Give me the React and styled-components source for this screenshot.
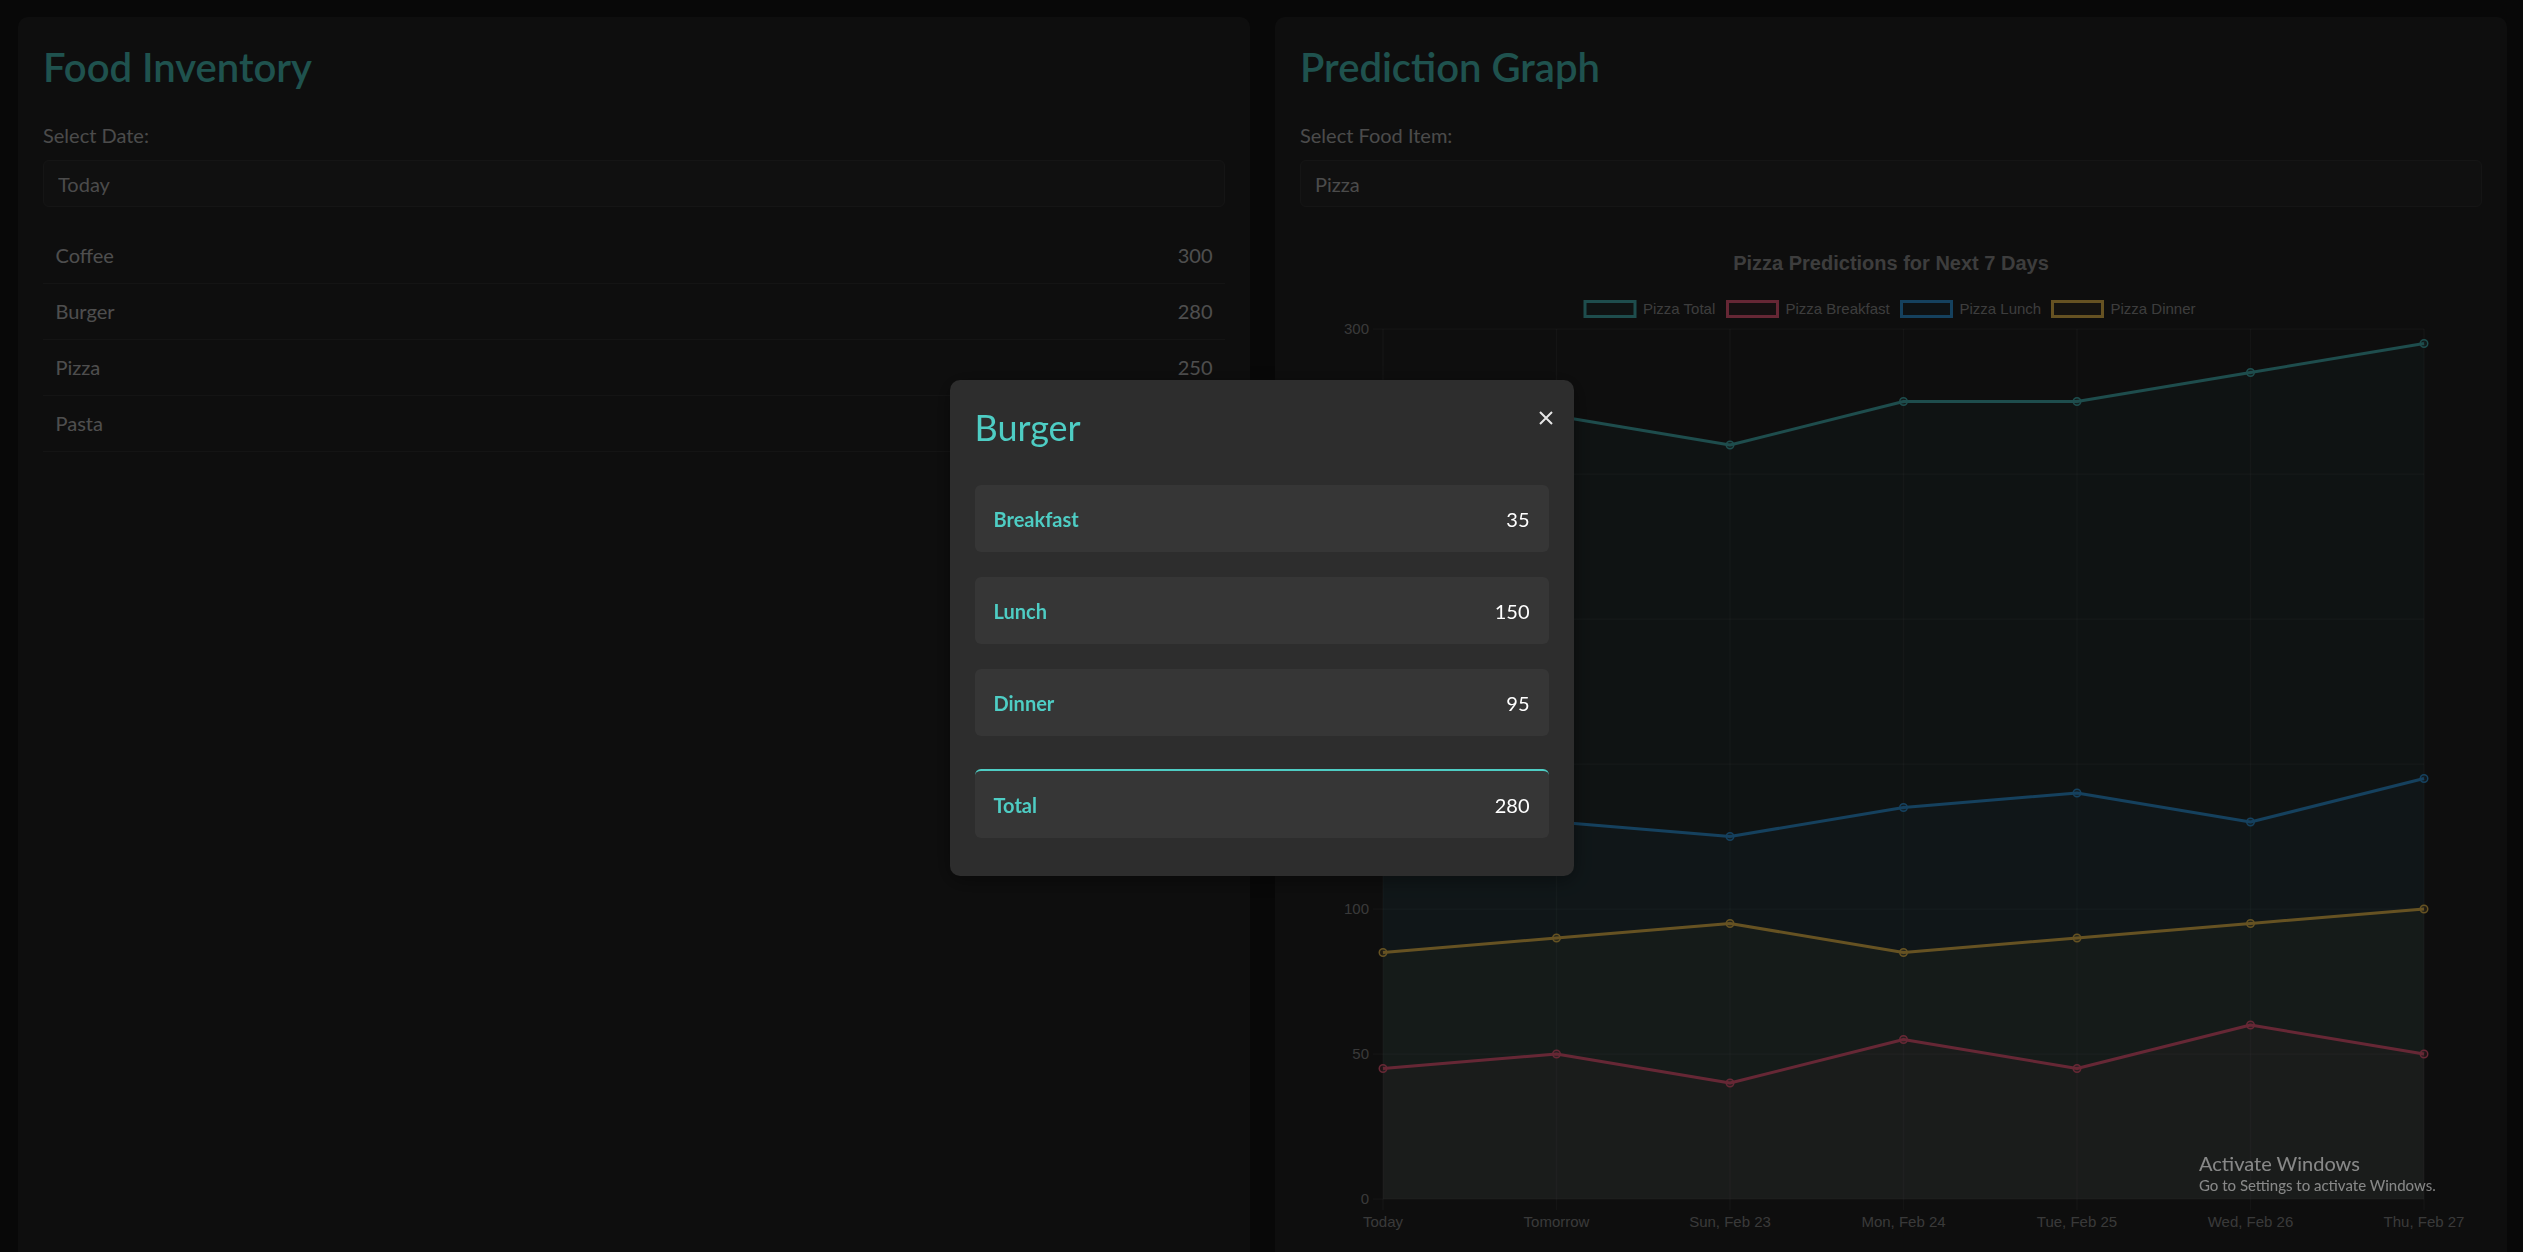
import React from 'react'
import styled, { createGlobalStyle } from 'styled-components'

const GlobalStyle = createGlobalStyle`
  * { box-sizing: border-box; }
  html, body {
    margin: 0;
    padding: 0;
    height: 100%;
    overflow: hidden;
    background: #141414;
  }
  body {
    font-family: Lato, "Segoe UI", "Open Sans", sans-serif;
    color: #c4c4c4;
  }
`

const inventory = [
    { name: 'Coffee', qty: 300 },
    { name: 'Burger', qty: 280 },
    { name: 'Pizza', qty: 250 },
    { name: 'Pasta', qty: 220 },
]

const burger = [
    { meal: 'Breakfast', qty: 35 },
    { meal: 'Lunch', qty: 150 },
    { meal: 'Dinner', qty: 95 },
]

// chart geometry (svg coords)
const W = 1182
const H = 1010
const X0 = 83
const STEP = 173.5
const Y0 = 973
const K = 2.9
const FILL_A = 0.08

const days = ['Today', 'Tomorrow', 'Sun, Feb 23', 'Mon, Feb 24', 'Tue, Feb 25', 'Wed, Feb 26', 'Thu, Feb 27']

const series = [
    { label: 'Pizza Total', rgb: '75,192,192', box: 285, data: [250, 270, 260, 275, 275, 285, 295] },
    { label: 'Pizza Breakfast', rgb: '255,99,132', box: 427.5, data: [45, 50, 40, 55, 45, 60, 50] },
    { label: 'Pizza Lunch', rgb: '54,162,235', box: 601.5, data: [120, 130, 125, 135, 140, 130, 145] },
    { label: 'Pizza Dinner', rgb: '255,206,86', box: 752.5, data: [85, 90, 95, 85, 90, 95, 100] },
]

const px = i => X0 + i * STEP
const py = v => Y0 - v * K

function linePath(data) {
    return data.map((v, i) => `${i ? 'L' : 'M'}${px(i)},${py(v)}`).join(' ')
}

function areaPath(data) {
    return `${linePath(data)} L${px(data.length - 1)},${Y0} L${px(0)},${Y0} Z`
}

function PredictionChart() {
    const ticks = [0, 50, 100, 150, 200, 250, 300]
    const drawOrder = [...series].reverse()
    return (
        <ChartSvg width={W} height={H} viewBox={`0 0 ${W} ${H}`}>
            <text x={591} y={44} textAnchor="middle" fontSize="20" fontWeight="700" fill="#999">
                Pizza Predictions for Next 7 Days
            </text>

            {series.map(s => (
                <g key={s.label}>
                    <rect x={s.box} y={75.5} width={50} height={15} fill={`rgba(${s.rgb},${FILL_A})`} stroke={`rgb(${s.rgb})`} strokeWidth="3" />
                    <text x={s.box + 58} y={88.4} fontSize="15" fill="#999">{s.label}</text>
                </g>
            ))}

            {ticks.map(t => (
                <line key={t} x1={X0 - 10} x2={px(6)} y1={py(t)} y2={py(t)} stroke="rgba(255,255,255,0.07)" strokeWidth="1.25" />
            ))}
            {days.map((d, i) => (
                <line key={d} x1={px(i)} x2={px(i)} y1={py(300)} y2={Y0 + 11} stroke="rgba(255,255,255,0.07)" strokeWidth="1.25" />
            ))}

            {drawOrder.map(s => (
                <path key={s.label} d={areaPath(s.data)} fill={`rgba(${s.rgb},${FILL_A})`} />
            ))}
            {drawOrder.map(s => (
                <g key={s.label}>
                    <path d={linePath(s.data)} fill="none" stroke={`rgb(${s.rgb})`} strokeWidth="3" strokeLinejoin="round" />
                    {s.data.map((v, i) => (
                        <circle key={i} cx={px(i)} cy={py(v)} r="3.75" fill={`rgba(${s.rgb},0.2)`} stroke={`rgb(${s.rgb})`} strokeWidth="1.5" />
                    ))}
                </g>
            ))}

            {ticks.map(t => (
                <text key={t} x={69} y={py(t) + 5.4} textAnchor="end" fontSize="15" fill="#909090">{t}</text>
            ))}
            {days.map((d, i) => (
                <text key={d} x={px(i)} y={1001} textAnchor="middle" fontSize="15" fill="#909090">{d}</text>
            ))}
        </ChartSvg>
    )
}

function App() {
    return (
        <>
            <GlobalStyle />
            <Page>
                <Panel>
                    <PanelTitle>Food Inventory</PanelTitle>
                    <FieldLabel>Select Date:</FieldLabel>
                    <Select defaultValue="today">
                        <option value="today">Today</option>
                        <option value="tomorrow">Tomorrow</option>
                    </Select>
                    <ItemList>
                        {inventory.map(item => (
                            <ItemRow key={item.name}>
                                <span>{item.name}</span>
                                <span>{item.qty}</span>
                            </ItemRow>
                        ))}
                    </ItemList>
                </Panel>

                <Panel>
                    <PanelTitle>Prediction Graph</PanelTitle>
                    <FieldLabel>Select Food Item:</FieldLabel>
                    <Select defaultValue="pizza">
                        <option value="coffee">Coffee</option>
                        <option value="burger">Burger</option>
                        <option value="pizza">Pizza</option>
                        <option value="pasta">Pasta</option>
                    </Select>
                    <PredictionChart />
                </Panel>
            </Page>

            <Overlay>
                <Modal>
                    <CloseButton aria-label="Close">
                        <svg width="14" height="14" viewBox="0 0 14 14">
                            <path d="M1 1 L13 13 M13 1 L1 13" stroke="#e6e6e6" strokeWidth="2" fill="none" />
                        </svg>
                    </CloseButton>
                    <ModalTitle>Burger</ModalTitle>
                    <MealList>
                        {burger.map(m => (
                            <MealRow key={m.meal}>
                                <MealName>{m.meal}</MealName>
                                <MealValue>{m.qty}</MealValue>
                            </MealRow>
                        ))}
                        <MealRow $total>
                            <MealName>Total</MealName>
                            <MealValue>280</MealValue>
                        </MealRow>
                    </MealList>
                </Modal>
            </Overlay>

            <Watermark>
                <strong>Activate Windows</strong>
                <span>Go to Settings to activate Windows.</span>
            </Watermark>
        </>
    )
}

const Page = styled.div`
    display: grid;
    grid-template-columns: 1fr 1fr;
    gap: 25px;
    padding: 17px 16px 0 18px;
    min-height: 100vh;
`

const Panel = styled.section`
    background: #242424;
    border-radius: 10px;
    padding: 25px;
`

const PanelTitle = styled.h2`
    margin: 0;
    font-size: 40px;
    line-height: 51px;
    font-weight: 600;
    color: #4ecdc4;
`

const FieldLabel = styled.label`
    display: block;
    margin-top: 29px;
    font-size: 20px;
    line-height: 27px;
    color: #bbb;
`

const Select = styled.select`
    display: block;
    width: 100%;
    height: 47px;
    margin-top: 11px;
    padding: 0 14px;
    appearance: none;
    background: #282828;
    border: 1px solid #363636;
    border-radius: 6px;
    font-family: inherit;
    font-size: 20px;
    color: #bbb;
    outline: none;
`

const ItemList = styled.div`
    margin-top: 21px;
`

const ItemRow = styled.div`
    display: flex;
    justify-content: space-between;
    padding: 15px 12.5px;
    line-height: 25px;
    font-size: 20px;
    color: #c4c4c4;
    border-bottom: 1px solid #333;
`

const ChartSvg = styled.svg`
    display: block;
    margin-top: 19px;
    font-family: "Liberation Sans", Arial, sans-serif;
`

const Overlay = styled.div`
    position: fixed;
    inset: 0;
    z-index: 10;
    display: flex;
    align-items: center;
    justify-content: center;
    padding-top: 4px;
    background: rgba(0, 0, 0, 0.6);
`

const Modal = styled.div`
    position: relative;
    width: 624px;
    padding: 25px;
    background: #2d2d2d;
    border-radius: 10px;
    box-shadow: 0 4px 20px rgba(0, 0, 0, 0.4);
`

const CloseButton = styled.button`
    position: absolute;
    top: 31px;
    right: 21px;
    width: 14px;
    height: 14px;
    padding: 0;
    border: none;
    background: none;
    cursor: pointer;
    svg { display: block; }
`

const ModalTitle = styled.h2`
    margin: 0 0 36px;
    font-size: 36px;
    line-height: 44px;
    font-weight: 400;
    color: #4ecdc4;
`

const MealList = styled.div`
    display: flex;
    flex-direction: column;
    gap: 25px;
`

const MealRow = styled.div`
    display: flex;
    justify-content: space-between;
    align-items: center;
    padding: 21px 19px 19px;
    line-height: 27px;
    font-size: 20px;
    background: #363636;
    border-radius: 6px;
    border-top: ${p => (p.$total ? '2px solid #4ecdc4' : 'none')};
    margin-top: ${p => (p.$total ? '8px' : '0')};
    margin-bottom: ${p => (p.$total ? '13px' : '0')};
`

const MealName = styled.span`
    font-weight: 700;
    color: #4ecdc4;
`

const MealValue = styled.span`
    color: #fff;
`

const Watermark = styled.div`
    position: fixed;
    left: 2199px;
    top: 1151px;
    z-index: 20;
    display: flex;
    flex-direction: column;
    pointer-events: none;
    color: rgba(255, 255, 255, 0.48);
    strong {
        font-weight: 400;
        font-size: 20px;
        line-height: 24px;
    }
    span {
        font-size: 15px;
        line-height: 21px;
    }
`

export default App
